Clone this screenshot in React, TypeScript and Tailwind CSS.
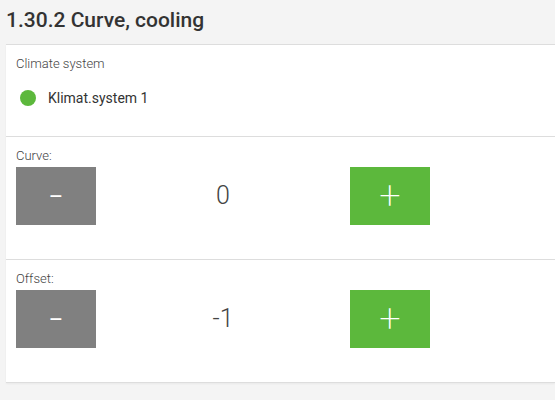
const sections = [
  { label: 'Curve:', value: '0' },
  { label: 'Offset:', value: '-1' },
];

function Stepper({ label, value }: { label: string; value: string }) {
  return (
    <div className="border-t border-[#dddddd] px-[10px] pt-[11px] pb-[34px]">
      <div className="text-[13px] leading-4 font-light text-[#444]">{label}</div>
      <div className="mt-[3px] flex items-center w-[414px]">
        <button className="w-20 h-[58px] bg-[#808080] text-white text-[22px] font-normal flex items-center justify-center">
          –
        </button>
        <div className="flex-1 text-center text-[25px] font-light text-[#444]">{value}</div>
        <button className="w-20 h-[58px] bg-[#5cb83c] text-white text-[38px] font-extralight flex items-center justify-center leading-none">
          +
        </button>
      </div>
    </div>
  );
}

export default function App() {
  return (
    <div className="min-h-[400px] bg-[#f4f4f4] font-['Roboto',sans-serif] text-[#333]">
      <h1 className="px-[6px] pt-[4px] h-[44px] text-[21px] font-medium leading-8 text-[#333]">
        1.30.2 Curve, cooling
      </h1>
      <div className="ml-[6px] bg-white border-t border-b border-[#dddddd] shadow-[0_1px_2px_rgba(0,0,0,0.05)]">
        <div className="px-[10px] pt-[11px] pb-[28px]">
          <div className="text-[13px] leading-4 font-light text-[#444]">Climate system</div>
          <div className="mt-4 flex items-center h-5 pl-1">
            <span className="w-4 h-4 rounded-full bg-[#5cb83c]" />
            <span className="ml-3 text-[14px] text-[#333]">Klimat.system 1</span>
          </div>
        </div>
        {sections.map((s) => (
          <Stepper key={s.label} label={s.label} value={s.value} />
        ))}
      </div>
    </div>
  );
}
